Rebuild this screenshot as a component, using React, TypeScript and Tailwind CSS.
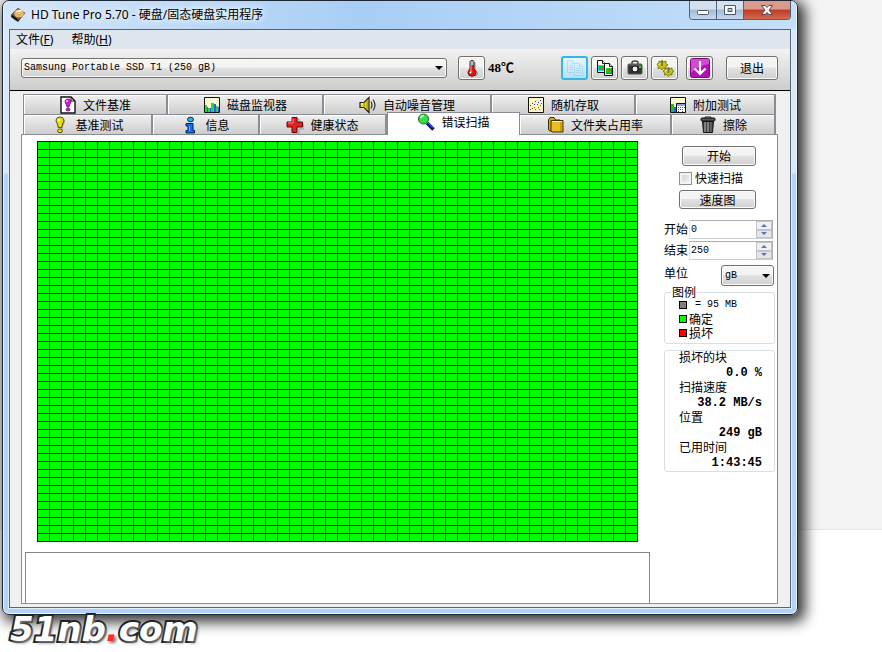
import type { ReactNode } from "react";

const face = "font-['Noto_Sans_CJK_SC',sans-serif]";
const mono = "font-['Liberation_Mono','Noto_Sans_CJK_SC',monospace]";
const glossy =
  "rounded-[3px] border border-[#707070] bg-linear-to-b from-[#f4f4f4] from-45% via-[#e2e2e2] via-50% to-[#cfcfcf] shadow-[inset_0_0_0_1px_#fbfbfb]";

function Icon({ children }: { children: ReactNode }) {
  return (
    <svg width="18" height="18" viewBox="0 0 18 18" className="shrink-0" aria-hidden="true">
      {children}
    </svg>
  );
}

const DiskIcon = () => (
  <Icon>
    <path d="M2 9 9 2l7 5-7 9-7-5z" fill="#2a2622" />
    <path d="M2 9 9 2l7 5-6 7z" fill="#6b5a4a" />
    <ellipse cx="10" cy="7.500" rx="4.800" ry="4" fill="#f0b56a" />
    <path d="M7 5.500a5 4 0 0 1 6-1L10 8z" fill="#fff0cf" />
    <circle cx="10" cy="7.500" r="1.300" fill="#fff" stroke="#98622c" strokeWidth=".6" />
    <path d="m3 10 5 4" stroke="#111" strokeWidth="2" />
  </Icon>
);
const ThermoIcon = () => (
  <Icon>
    <path d="M12 3v8l2 2v3l-2 1" stroke="#888" fill="none" />
    <path d="M7 2.500Q9 0 11 2.500V10q2 1.500 2 3.500a4 3.800 0 0 1-8 0Q5 11.500 7 10z" fill="#e01818" stroke="#701010" />
    <path d="M7.500 2.500Q9 1 10.500 2.500V6h-3z" fill="#50e0e8" />
    <path d="M8 6v7" stroke="#ff9a9a" />
    <circle cx="7.500" cy="13.500" r="1" fill="#fff" />
  </Icon>
);
function CopyIcon({ faded = false, picture = false }) {
  return (
    <Icon>
      <g opacity={faded ? 0.22 : 1} stroke={faded ? "#4a9ac8" : "#111"} fill={faded ? "#d8eef8" : "#fff"}>
        <path d="M1.500 1.500h5l3 3v9h-8z" />
        <path d="M6.500 1.500v3h3" />
        <path d="M8.500 4.500h5l3 3v9h-8z" />
        <path d="M13.500 4.500v3h3" />
        {!picture && <path d="M3 6.500h4M3 8.500h4M3 10.500h4M10 9.500h5M10 11.500h5M10 13.500h5" />}
      </g>
      {picture && (
        <>
          <path d="M2 6h6v6H2z" fill="#2ad4e8" />
          <path d="M3 7h5v4H3z" fill="#0bc21c" />
          <path d="M5 8h2v2H5z" fill="#e8502a" />
          <path d="M10 9h6v6h-6z" fill="#1c6ff0" />
          <path d="M10 9h5v5h-5z" fill="#0bd21c" />
          <path d="M12 10h2v2h-2z" fill="#e8502a" />
        </>
      )}
    </Icon>
  );
}
const CameraIcon = () => (
  <Icon>
    <path d="M6 5V3.500Q6 2 9 2t3 1.500V5" fill="none" stroke="#444" strokeWidth="1.500" />
    <rect x="2" y="5" width="14" height="10" rx="1" fill="#333" stroke="#555" />
    <path d="M3 6h12" stroke="#777" />
    <circle cx="9" cy="10" r="3" fill="#eee" stroke="#111" />
    <path d="M13 7h2v2h-2z" fill="#1ddd3c" />
  </Icon>
);
const GearsIcon = () => (
  <Icon>
    <g fill="#c9c416" stroke="#6f6b00" strokeWidth=".8">
      <path d="m1 5 2-1V2l2 1 1-2 1.500 2L10 2v2.500L12 6l-2 1v2.500L7.500 9 6 11 4.500 9 2 9.500V7z" />
      <path d="m7 12 2-1V9l2 1 1.500-2L14 10l2-1v2l2 1.500-2 1V16l-2-.5-1.500 2-1.500-2-2.500.5v-2z" />
    </g>
    <path d="M6 2v5M12.500 9v5" stroke="#6f6b40" strokeWidth="1.600" />
    <path d="m2.500 5.500 2-1M9 12l2-1" stroke="#fff96a" />
  </Icon>
);
const DownIcon = () => (
  <svg width="20" height="20" viewBox="0 0 20 20" className="shrink-0" aria-hidden="true">
    <rect x=".5" y=".5" width="19" height="19" rx="2" fill="#b411b4" stroke="#7d087d" />
    <path d="M1 2q0-1 1-1h16q1 0 1 1v4Q8 8 1 15z" fill="#cf4bd0" />
    <path d="M10 3v13M4.500 10.500 10 16l5.500-5.500" fill="none" stroke="#fff" strokeWidth="2.200" />
  </svg>
);
const BulbIcon = () => (
  <Icon>
    <path d="M10 2q4 1 3 5l-2 4v3q0 2-2 3" stroke="#999" fill="none" />
    <path d="M5 4Q5.500 1 9 1t4 3q0 2-1.500 4l-.7 3.500H7.200L6.500 8Q5 6 5 4z" fill="#e6de12" stroke="#4b4400" strokeWidth=".9" />
    <circle cx="7.800" cy="4" r="1.300" fill="#fffbb0" />
    <ellipse cx="9" cy="14.800" rx="2.400" ry="1.900" fill="#e6de12" stroke="#4b4400" strokeWidth=".9" />
  </Icon>
);
const FileBulbIcon = () => (
  <Icon>
    <path d="M2 1h10l4 4v12H2z" fill="#fff" stroke="#111" strokeWidth="1.400" />
    <path d="M12 1v4h4" fill="none" stroke="#111" />
    <path d="M6 5q.5-2 3-2t3 2q0 2-1.500 4l-.5 2H8l-.5-2Q6 7 6 5z" fill="#d719d7" stroke="#5e075e" strokeWidth=".7" />
    <ellipse cx="9" cy="13.500" rx="2" ry="1.500" fill="#d719d7" stroke="#5e075e" strokeWidth=".7" />
    <circle cx="8" cy="5" r="1" fill="#ffc4ff" />
  </Icon>
);
const MonitorIcon = () => (
  <Icon>
    <path d="M1.500 1.500h15v15h-15z" fill="#fffbd0" />
    <path d="M2 9h2v7H2zM5 12h2v4H5zM8 7h3v9H8zM13 10h2v6h-2z" fill="#2dd53a" />
    <path d="M4 11h1v5H4zM7 12h1v4H7zM11 8h2v8h-2zM15 11h1v5h-1z" fill="#3454ff" />
    <path d="M1.500 1.500h15v15h-15z" fill="none" stroke="#111" />
  </Icon>
);
const SpeakerIcon = () => (
  <Icon>
    <path d="M1 6.500h4l5-5v15l-5-5H1z" fill="#e8de16" stroke="#222" strokeWidth="1.200" />
    <path d="M5 6v6M8 4v10" stroke="#8c8300" />
    <path d="M2 8h2" stroke="#fff" />
    <path d="M12 5.500q2 3.500 0 7M14 3.500q4 5.500 0 11" fill="none" stroke="#333" strokeWidth="1.200" />
  </Icon>
);
const ScatterIcon = () => (
  <Icon>
    <path d="M1.500 1.500h15v15h-15z" fill="#fff6c4" stroke="#111" />
    <path d="M3 9h1v1H3zM5 7h1v1H5zM7 8h1v1H7zM8 5h1v1H8zM11 6h1v1h-1zM13 4h1v1h-1zM10 8h1v1h-1z" fill="#2233ff" />
    <path d="M3 13h1v1H3zM5 12h1v1H5zM7 11h1v1H7zM8 13h1v1H8zM11 11h1v1h-1zM13 9h1v1h-1zM12 13h1v1h-1zM14 7h1v1h-1z" fill="#f02020" />
  </Icon>
);
const ExtraIcon = () => (
  <Icon>
    <path d="M1.500 1.500h15v15h-15z" fill="#fffbd0" stroke="#111" />
    <path d="M2 8h3v8H2z" fill="#19c42a" />
    <path d="M5 11h2v5H5z" fill="#3454ff" />
    <path d="M7.500 7.500h9v9h-9z" fill="#fff" stroke="#111" />
    <path d="M8 8h8v2H8z" fill="#89a2e8" />
    <path d="M9 11h1v1H9zM11 11h1v1h-1zM13 11h1v1h-1zM9 13h1v1H9zM13 13h1v1h-1z" fill="#f02020" />
    <path d="M11 13h1v1h-1zM15 11h1v1h-1zM9 15h1v1H9zM13 15h1v1h-1z" fill="#2233ff" />
  </Icon>
);
const InfoIcon = () => (
  <Icon>
    <ellipse cx="9.500" cy="3.500" rx="3" ry="2.300" fill="#1fb3ee" stroke="#0a2a60" />
    <path d="M5 7.500h7v7h1.500V17H5v-2.500h2V10H5z" fill="#176ff0" stroke="#0a2050" />
    <path d="M8.500 10v5" stroke="#62b8ff" />
  </Icon>
);
const HealthIcon = () => (
  <Icon>
    <path d="M7 3h6v5h5v5h-5v5H7" fill="none" stroke="#999" />
    <path d="M6 1.500h5V6h5.500v5H11v5.500H6V11H1V6h5z" fill="#dc2424" stroke="#5d0808" />
    <path d="M7 7V2.500M2 7h5" stroke="#ff8d8d" />
  </Icon>
);
const LensIcon = () => (
  <Icon>
    <path d="m10 10 6.500 6.500" stroke="#0b1470" strokeWidth="3.600" />
    <path d="m11 10 5 5" stroke="#2848ff" strokeWidth="1.400" />
    <circle cx="6.500" cy="6" r="5" fill="#3dda4a" stroke="#136a1c" />
    <path d="M3.500 5q1-2.500 3.500-2.500" fill="none" stroke="#d7ffd9" strokeWidth="1.500" />
  </Icon>
);
const FolderIcon = () => (
  <Icon>
    <path d="M1.500 4 3 1.500h4L8.500 4H13v11H3l-1.500-1z" fill="#d9a916" stroke="#3d2c00" />
    <path d="M4 4.500h12V16H5l-1-1z" fill="#e8bd25" stroke="#3d2c00" />
    <path d="M5 5.500h10" stroke="#fff2a0" />
    <path d="M14 6v9" stroke="#a67c0c" />
  </Icon>
);
const BinIcon = () => (
  <Icon>
    <path d="M6 2V1h6v1" fill="none" stroke="#222" />
    <rect x="2" y="2" width="14" height="3" rx="1" fill="#555" stroke="#111" />
    <path d="M3.500 5.500h11l-1 11h-9z" fill="#444" stroke="#111" />
    <path d="M6 6v10M9 6v10" stroke="#bbb" />
    <path d="M12 6v10" stroke="#777" />
  </Icon>
);

type TabInfo = { label: string; icon: ReactNode; active?: boolean };
const backTabs: TabInfo[] = [
  { label: "文件基准", icon: <FileBulbIcon /> },
  { label: "磁盘监视器", icon: <MonitorIcon /> },
  { label: "自动噪音管理", icon: <SpeakerIcon /> },
  { label: "随机存取", icon: <ScatterIcon /> },
  { label: "附加测试", icon: <ExtraIcon /> },
];
const frontTabs: TabInfo[] = [
  { label: "基准测试", icon: <BulbIcon /> },
  { label: "信息", icon: <InfoIcon /> },
  { label: "健康状态", icon: <HealthIcon /> },
  { label: "错误扫描", icon: <LensIcon />, active: true },
  { label: "文件夹占用率", icon: <FolderIcon /> },
  { label: "擦除", icon: <BinIcon /> },
];

function Tab({ label, icon, active }: TabInfo) {
  return (
    <button
      role="tab"
      aria-selected={!!active}
      className={
        active
          ? "relative -mt-0.5 -mb-px flex items-center justify-center gap-1.5 border-x border-t border-[#8b8d96] bg-white pb-1"
          : "flex h-5 items-center justify-center gap-1.5 border-t border-r-2 border-[#8b8d96] bg-linear-to-b from-[#f0f0f0] to-[#cdcdcd] shadow-[inset_1px_1px_0_#fff]"
      }
    >
      {icon}
      {label}
    </button>
  );
}

function ToolButton({ label, hot, children }: { label: string; hot?: boolean; children: ReactNode }) {
  return (
    <button
      aria-label={label}
      className={
        hot
          ? "flex h-6 w-[27px] items-center justify-center rounded-[3px] border-2 border-[#35b4ea] bg-linear-to-b from-[#e6f6fd] to-[#b5e2f8]"
          : `flex h-6 w-[27px] items-center justify-center ${glossy}`
      }
    >
      {children}
    </button>
  );
}

function Spinner({ id, label, value }: { id: string; label: string; value: string }) {
  return (
    <div className="flex h-[19px] items-center">
      <label htmlFor={id} className="w-[25px] shrink-0 pb-0.5">
        {label}
      </label>
      <div className="mr-0.5 flex h-full min-w-0 flex-1 border border-[#abadb3] border-b-[#c9ccd4] border-l-[#e2e3ea] bg-white">
        <input id={id} defaultValue={value} className={`min-w-0 flex-1 pl-px text-[10px] outline-none ${mono}`} />
        <div className="flex w-4 flex-col">
          <button aria-label={`${label} +`} className="flex flex-1 items-center justify-center border border-[#c2c4cc] bg-[#f0f0f0]">
            <span className="border-x-3 border-b-3 border-x-transparent border-b-[#5874b8]" />
          </button>
          <button aria-label={`${label} -`} className="flex flex-1 items-center justify-center border border-[#c2c4cc] bg-[#e6e6e6]">
            <span className="border-x-3 border-t-3 border-x-transparent border-t-[#5874b8]" />
          </button>
        </div>
      </div>
    </div>
  );
}

const legend = [
  { swatch: "bg-[#808080]", text: "= 95 MB", style: `pl-1.5 text-[10px] ${mono}` },
  { swatch: "bg-[#00ff00]", text: "确定", style: "" },
  { swatch: "bg-[#ff0000]", text: "损坏", style: "" },
];
const stats = [
  ["损坏的块", "0.0 %"],
  ["扫描速度", "38.2 MB/s"],
  ["位置", "249 gB"],
  ["已用时间", "1:43:45"],
];

function Arrow() {
  return (
    <span className="pointer-events-none absolute top-1/2 right-1 -mt-0.5 border-x-4 border-t-4 border-x-transparent border-t-black" />
  );
}

export default function App() {
  return (
    <div
      className={`min-h-screen bg-[linear-gradient(#f4f4f4_529px,#e6e6e6_529px,#e6e6e6_530px,#fff_530px)] text-xs leading-none text-black ${face}`}
    >
      <div className="relative mr-[84px] ml-0.5 rounded-[7px] border border-[#1b2733] bg-[linear-gradient(#d9e8f6_172px,#b2d3f7_173px)] px-[5px] pb-[5px] shadow-[inset_0_0_0_1px_#eef6fd,4px_4px_14px_3px_rgba(0,0,0,0.8)]">
        <header className="-mx-1 flex h-7 items-start rounded-t-[6px] bg-linear-to-r from-[#d3e6f8] via-[#a9cef4] via-45% to-[#c4dff9] pl-[5px]">
          <h1 className="flex h-full flex-1 items-center gap-1 text-xs font-normal">
            <DiskIcon />
            <span className="font-['Noto_Sans','Noto_Sans_CJK_SC',sans-serif] [text-shadow:0_0_6px_#fff,0_0_8px_#fff]">
              HD Tune Pro 5.70 - 硬盘/固态硬盘实用程序
            </span>
          </h1>
          <div className="mr-[5px] flex h-[19px] overflow-hidden rounded-b-[4px] border border-t-0 border-[#52647a]">
            <button
              aria-label="最小化"
              className="flex w-[27px] items-center justify-center border-r border-[#52647a] bg-linear-to-b from-[#d3e0ee] from-45% via-[#a5bbd4] via-50% to-[#c4d9ee]"
            >
              <svg width="14" height="12" viewBox="0 0 14 12">
                <rect x="1.500" y="6.500" width="11" height="4" rx="1" fill="#fff" stroke="#4d5868" />
              </svg>
            </button>
            <button
              aria-label="最大化"
              className="flex w-[27px] items-center justify-center border-r border-[#52647a] bg-linear-to-b from-[#d3e0ee] from-45% via-[#a5bbd4] via-50% to-[#c4d9ee]"
            >
              <svg width="14" height="12" viewBox="0 0 14 12">
                <path fillRule="evenodd" d="M1.500 1.500h11v9h-11zM5 4.500h4v3H5z" fill="#fff" stroke="#4d5868" />
              </svg>
            </button>
            <button
              aria-label="关闭"
              className="flex w-[46px] items-center justify-center bg-linear-to-b from-[#dc9a8c] from-45% via-[#bd3a24] via-50% to-[#d4694f]"
            >
              <svg width="14" height="12" viewBox="0 0 14 12">
                <path
                  d="M1.500 1.500h3.500l2 2 2-2h3.500L9 6l3.500 4.500H9l-2-2-2 2H1.500L5 6z"
                  fill="#fff"
                  stroke="#54454c"
                />
              </svg>
            </button>
          </div>
        </header>

        <div className="border border-[#e3eefa] border-t-0">
          <main className="border border-[#566575] bg-[#f0f0f0]">
            <nav className="flex h-[19px] items-center gap-[18px] bg-[#dfe5ed] pl-1.5 font-['Noto_Sans','Noto_Sans_CJK_SC',sans-serif]">
              <button>
                文件(<u>F</u>)
              </button>
              <button>
                帮助(<u>H</u>)
              </button>
            </nav>

            <div className="flex h-[42px] items-center border-b border-black bg-linear-to-b from-[#f2f2f2] to-[#cdcdcd] pr-3 pb-1 pl-[11px]">
              <div className="relative mr-[11px] flex-1">
                <select
                  aria-label="驱动器"
                  className={`block h-5 w-full appearance-none pl-0.5 text-[10px] outline-none ${glossy} ${mono}`}
                >
                  <option>Samsung Portable SSD T1 (250 gB)</option>
                </select>
                <Arrow />
              </div>
              <ToolButton label="温度">
                <ThermoIcon />
              </ToolButton>
              <output className="w-[76px] pl-[3px] font-['Liberation_Serif','Noto_Sans_CJK_SC',serif] text-[13px] font-bold">48℃</output>
              <div className="flex gap-[3px]">
                <ToolButton label="复制文本" hot>
                  <CopyIcon faded />
                </ToolButton>
                <ToolButton label="复制图像">
                  <CopyIcon picture />
                </ToolButton>
                <ToolButton label="截图">
                  <CameraIcon />
                </ToolButton>
                <ToolButton label="选项">
                  <GearsIcon />
                </ToolButton>
              </div>
              <div className="ml-2 flex gap-[13px]">
                <ToolButton label="保存">
                  <DownIcon />
                </ToolButton>
                <button className={`h-6 w-[52px] ${glossy}`}>退出</button>
              </div>
            </div>

            <div className="pt-[3px] pr-3 pb-[3px] pl-[11px]">
              <div role="tablist" className="mx-0.5 border-l border-[#8b8d96]">
                <div className="grid grid-cols-[144fr_156fr_168fr_144fr_140fr]">
                  {backTabs.map((t) => (
                    <Tab key={t.label} {...t} />
                  ))}
                </div>
                <div className="grid grid-cols-[129fr_107fr_127fr_133fr_152fr_104fr]">
                  {frontTabs.map((t) => (
                    <Tab key={t.label} {...t} />
                  ))}
                </div>
              </div>

              <section className="flex border border-[#8b8d96] bg-white pt-1.5 pr-0.5 pl-[3px]">
                <div className="mr-[14px] flex flex-1 flex-col gap-2.5">
                  <svg width="601" height="401" className="ml-3 bg-[#00ff00]" role="img" aria-label="扫描块">
                    <defs>
                      <pattern id="block" width="12" height="8" patternUnits="userSpaceOnUse">
                        <path d="M0 0h12v1H1v7H0z" fill="#001c00" shapeRendering="crispEdges" />
                      </pattern>
                    </defs>
                    <rect width="601" height="401" fill="url(#block)" />
                  </svg>
                  <textarea
                    aria-label="扫描日志"
                    readOnly
                    className="block h-[51px] w-full resize-none border-x border-t border-[#82868f] bg-white outline-none"
                  />
                </div>

                <aside className="w-[111px] shrink-0 pt-[5px]">
                  <div className="mr-[19px] mb-[11px] flex flex-col items-end gap-[3px]">
                    <button className={`h-5 w-[74px] ${glossy}`}>开始</button>
                    <label className="flex h-[18px] w-[77px] items-center gap-[3px] whitespace-nowrap">
                      <input
                        type="checkbox"
                        className="size-[13px] shrink-0 appearance-none border border-[#8e8f8f] bg-linear-to-br from-[#cdd0d5] to-[#f6f6f6] shadow-[inset_0_0_0_2px_#f4f4f4]"
                      />
                      快速扫描
                    </label>
                    <button className={`h-[19px] w-[77px] ${glossy}`}>速度图</button>
                  </div>
                  <div className="flex flex-col gap-0.5">
                    <Spinner id="from" label="开始" value="0" />
                    <Spinner id="to" label="结束" value="250" />
                  </div>
                  <div className="mt-[5px] flex justify-between">
                    <label htmlFor="unit" className="pt-0.5">
                      单位
                    </label>
                    <div className="relative mr-px w-[53px]">
                      <select id="unit" className={`block h-[21px] w-full appearance-none pl-[3px] text-[10px] outline-none ${glossy} ${mono}`}>
                        <option>gB</option>
                      </select>
                      <Arrow />
                    </div>
                  </div>
                  <fieldset className="rounded-[3px] border border-[#d5dfe5] pb-[3px] pl-[14px]">
                    <legend className="-ml-2 px-px leading-3">图例</legend>
                    {legend.map((item) => (
                      <div key={item.text} className="flex h-[14px] items-center gap-0.5">
                        <span className={`size-2 border border-black ${item.swatch}`} />
                        <span className={item.style}>{item.text}</span>
                      </div>
                    ))}
                  </fieldset>
                  <dl className="mt-1.5 rounded-[3px] border border-[#d5dfe5] pr-3 pl-[14px]">
                    {stats.map(([name, value]) => (
                      <div key={name}>
                        <dt className="h-[15px] leading-3">{name}</dt>
                        <dd className={`h-[15px] text-right leading-[15px] font-bold ${mono}`}>{value}</dd>
                      </div>
                    ))}
                  </dl>
                </aside>
              </section>
            </div>
          </main>
        </div>
      </div>

      <p className="relative pl-2.5 font-['DejaVu_Sans',sans-serif] text-[34px] leading-7 font-bold text-white italic [-webkit-text-stroke:4px_#222] [paint-order:stroke_fill] [text-shadow:2px_2px_3px_#777]">
        51nb<span className="text-[#ff2a2a] [-webkit-text-stroke:0px]">.</span>com
      </p>
    </div>
  );
}
